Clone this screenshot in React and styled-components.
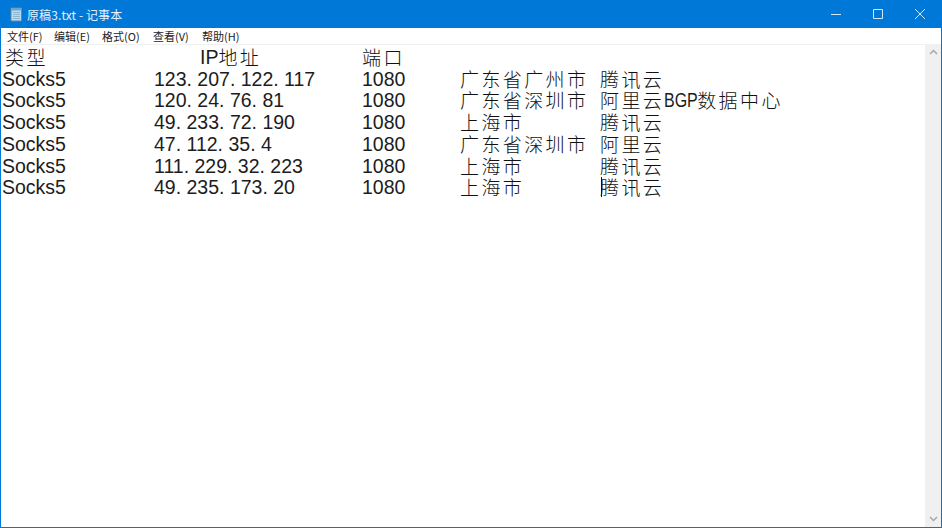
import React from 'react';
import styled, { createGlobalStyle } from 'styled-components';

const GlobalStyle = createGlobalStyle`
  html, body {
    margin: 0;
    padding: 0;
    background: #fff;
  }
`;

const Window = styled.div`
  display: flex;
  flex-direction: column;
  width: 942px;
  height: 528px;
  box-sizing: border-box;
  border: 1px solid #0078d7;
  border-top: 0;
  overflow: hidden;
  background: #fff;
`;

const TitleBar = styled.div`
  display: flex;
  align-items: center;
  flex: 0 0 28px;
  padding-left: 8px;
  background: #0078d7;
`;

const AppIcon = styled.svg`
  width: 14px;
  height: 16px;
  margin-right: 4px;
`;

const Title = styled.div`
  flex: 1;
  color: #e4f1fb;
  font: 12px "Noto Sans CJK SC", "Liberation Sans", sans-serif;
  letter-spacing: 0.1px;
`;

const WinButton = styled.div`
  display: flex;
  align-items: center;
  justify-content: center;
  width: 42px;
  height: 28px;
  color: #cfe8fb;
`;

const MenuBar = styled.div`
  display: flex;
  flex: 0 0 16px;
  align-items: center;
  padding-left: 6px;
  border-bottom: 1px solid #f0f0f0;
`;

const MenuItem = styled.div`
  width: ${(p) => p.$width}px;
  color: #222;
  font: 11px "Noto Sans CJK SC", "Liberation Sans", sans-serif;
  white-space: nowrap;
`;

const Body = styled.div`
  display: flex;
  flex: 1;
  min-height: 0;
`;

const Editor = styled.div`
  flex: 1;
  padding: 1px 0 0 1px;
`;

const Row = styled.div`
  display: grid;
  position: relative;
  grid-template-columns: 152px 208px 98px 140px 1fr;
  height: 21.75px;
  color: #1c1c1c;
  font-family: "Liberation Sans", sans-serif;
  font-size: 19.5px;
  line-height: 20px;
  white-space: nowrap;
`;

const Cell = styled.div`
  display: flex;
  align-items: center;
  height: 21.75px;
  padding-left: ${(p) => p.$indent || 0}px;
`;

const Cjk = styled.span`
  height: 20px;
  line-height: 20px;
  font-family: "Noto Sans CJK SC", sans-serif;
  font-size: 19px;
  font-weight: 300;
  letter-spacing: 2.4px;
  color: #111;
`;

const Dot = styled.span`
  margin-right: 5.4px;
`;

const Narrow = styled.span`
  width: 33px;
  transform: scaleX(0.82);
  transform-origin: left center;
`;

const Caret = styled.div`
  position: absolute;
  left: 599px;
  top: 0;
  width: 1px;
  height: 20px;
  background: #111;
`;

const Scrollbar = styled.div`
  display: flex;
  flex-direction: column;
  justify-content: space-between;
  align-items: center;
  flex: 0 0 16px;
  padding: 4px 0 5px;
  box-sizing: border-box;
  background: #f0f0f0;
`;

const Arrow = styled.svg`
  width: 9px;
  height: 6px;
`;

const rows = [
  ['123.207.122.117', '广东省广州市', '腾讯云'],
  ['120.24.76.81', '广东省深圳市', '阿里云', 'BGP', '数据中心'],
  ['49.233.72.190', '上海市', '腾讯云'],
  ['47.112.35.4', '广东省深圳市', '阿里云'],
  ['111.229.32.223', '上海市', '腾讯云'],
  ['49.235.173.20', '上海市', '腾讯云'],
];

const Ip = ({ value }) => {
  const parts = value.split('.');
  return (
    <span>
      {parts.map((part, i) => (
        <React.Fragment key={i}>
          {part}
          {i < parts.length - 1 && <Dot>.</Dot>}
        </React.Fragment>
      ))}
    </span>
  );
};

const NotepadIcon = () => (
  <AppIcon viewBox="0 0 14 16">
    <path d="M2 2h10.5v13H2z" fill="#b9dcf2" stroke="#5a87a8" />
    <path d="M2 2h10.5v2.5H2z" fill="#6fa3c8" />
    <path d="M4 6.5h7M4 8.5h7M4 10.5h7M4 12.5h7" stroke="#8db4cf" />
  </AppIcon>
);

const menus = [
  ['文件(F)', 47],
  ['编辑(E)', 48],
  ['格式(O)', 51],
  ['查看(V)', 49],
  ['帮助(H)', 50],
];

const App = () => (
  <Window>
    <GlobalStyle />
    <TitleBar>
      <NotepadIcon />
      <Title>原稿3.txt - 记事本</Title>
      <WinButton>
        <svg width="10" height="10"><path d="M0 5.5h10" stroke="currentColor" /></svg>
      </WinButton>
      <WinButton>
        <svg width="10" height="10"><path d="M.5.5h9v9h-9z" fill="none" stroke="currentColor" /></svg>
      </WinButton>
      <WinButton>
        <svg width="10" height="10"><path d="M0 0l10 10M10 0L0 10" stroke="currentColor" /></svg>
      </WinButton>
    </TitleBar>
    <MenuBar>
      {menus.map(([label, width]) => (
        <MenuItem key={label} $width={width}>{label}</MenuItem>
      ))}
    </MenuBar>
    <Body>
      <Editor>
        <Row>
          <Cell $indent={3}><Cjk>类型</Cjk></Cell>
          <Cell $indent={46}>IP<Cjk>地址</Cjk></Cell>
          <Cell><Cjk>端口</Cjk></Cell>
        </Row>
        {rows.map(([ip, region, isp, latin, rest], i) => (
          <Row key={i}>
            <Cell>Socks5</Cell>
            <Cell><Ip value={ip} /></Cell>
            <Cell>1080</Cell>
            <Cell><Cjk>{region}</Cjk></Cell>
            <Cell>
              <Cjk>{isp}</Cjk>
              {latin && <Narrow>{latin}</Narrow>}
              {rest && <Cjk>{rest}</Cjk>}
            </Cell>
            {i === rows.length - 1 && <Caret />}
          </Row>
        ))}
      </Editor>
      <Scrollbar>
        <Arrow viewBox="0 0 9 6"><path d="M1 5l3.5-3.5L8 5" fill="none" stroke="#a6a6a6" strokeWidth="1.5" /></Arrow>
        <Arrow viewBox="0 0 9 6"><path d="M1 1l3.5 3.5L8 1" fill="none" stroke="#a6a6a6" strokeWidth="1.5" /></Arrow>
      </Scrollbar>
    </Body>
  </Window>
);

export default App;
